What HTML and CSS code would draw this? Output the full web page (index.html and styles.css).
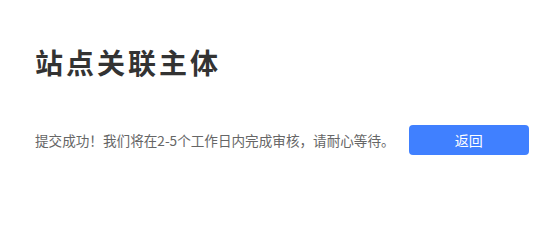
FILE: index.html
```html
<!DOCTYPE html>
<html lang="zh-CN">
<head>
<meta charset="utf-8">
<title>站点关联主体</title>
<link rel="stylesheet" href="styles.css">
</head>
<body>
<div class="page">
  <h1 class="title">站点关联主体</h1>
  <div class="row">
    <p class="message">提交成功！我们将在2-5个工作日内完成审核，请耐心等待。</p>
    <button class="btn" type="button">返回</button>
  </div>
</div>
</body>
</html>
```
FILE: styles.css
```css
html, body {
  margin: 0;
  padding: 0;
  background: #ffffff;
}
body {
  font-family: "Noto Sans CJK SC", "Noto Sans", sans-serif;
}
.page {
  padding: 42px 0 42px 35px;
}
.title {
  margin: 0;
  font-size: 28px;
  line-height: 40px;
  font-weight: 700;
  letter-spacing: 3px;
  color: #333333;
}
.row {
  margin-top: 43px;
  display: flex;
  align-items: center;
  gap: 14px;
}
.message {
  margin: 0;
  font-size: 13.6px;
  line-height: 20px;
  color: #666666;
  white-space: nowrap;
  flex-shrink: 0;
}
.btn {
  flex-shrink: 0;
  width: 120px;
  height: 30px;
  border: none;
  border-radius: 4px;
  background: #4080ff;
  color: #ffffff;
  font-family: inherit;
  font-size: 14px;
  padding: 0;
  cursor: pointer;
}
```
